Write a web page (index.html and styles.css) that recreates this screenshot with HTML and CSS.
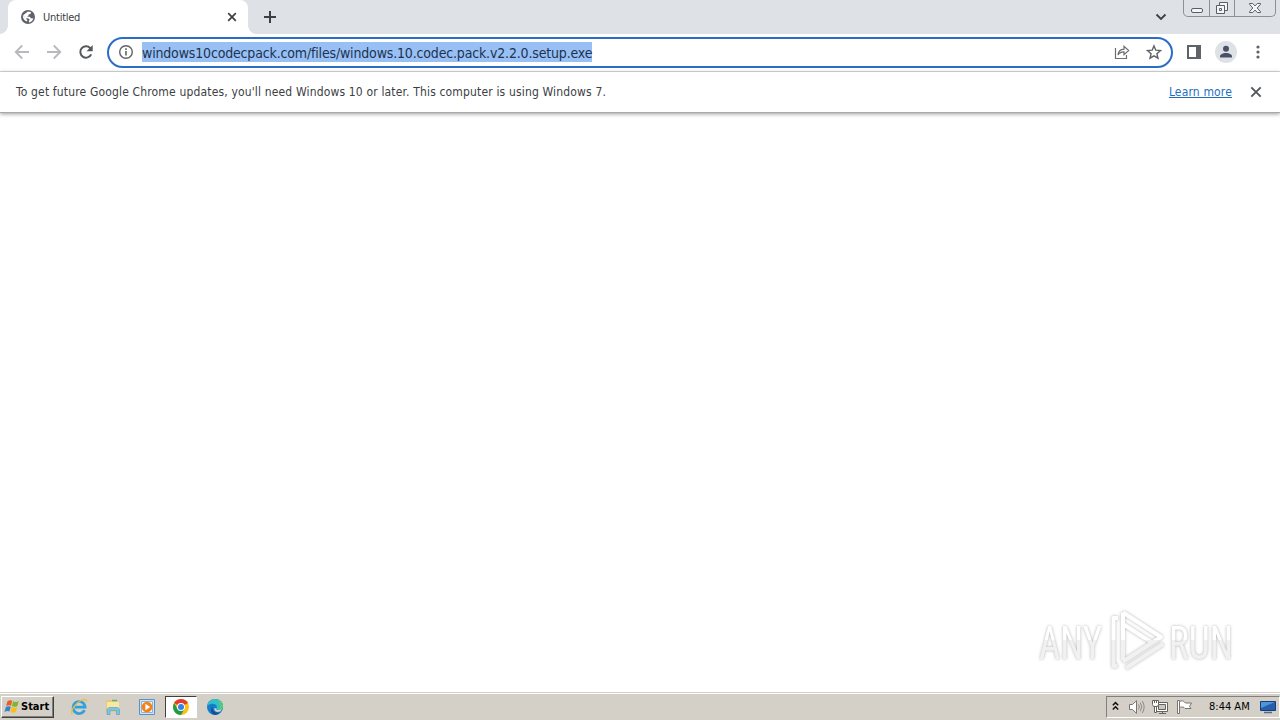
FILE: index.html
```html
<!DOCTYPE html>
<html lang="en">
<head>
    <meta charset="UTF-8">
    <meta name="viewport" content="width=device-width, initial-scale=1.0">
    <title>Untitled</title>
    <link rel="stylesheet" href="styles.css">
</head>
<body>
    <header class="tabstrip">
        <div class="tab">
            <svg class="globe" width="16" height="16" viewBox="0 0 16 16">
                <circle cx="8" cy="8" r="7" fill="#5f6368"/>
                <path d="M8 2.6l3.2.6-.8 1.8-1.8.4-.3 1.7-1.6.7h3l1.2 1.5 2.4.2c-.5 2-2 3.500-4.200 4l-.3-1.600 1-1.400-1.800-1.300-2.400-.3-2.900-2.300c.2 3.200 1.700 5.300 4.400 6l.2-1.700-1.600-1.300V8.900L3 6.300z" fill="#fff"/>
            </svg>
            <span class="tab-title">Untitled</span>
            <svg width="10" height="10" viewBox="0 0 10 10"><path d="M1.2 1.2l7.6 7.6M8.8 1.2L1.2 8.8" stroke="#3c4043" stroke-width="1.7"/></svg>
        </div>
        <svg class="new-tab" width="14" height="14" viewBox="0 0 14 14"><path d="M7 1v12M1 7h12" stroke="#3c4043" stroke-width="2"/></svg>
        <svg class="tab-search" width="12" height="8" viewBox="0 0 12 8"><path d="M1.5 1.5L6 6l4.500-4.500" fill="none" stroke="#3c4043" stroke-width="1.8"/></svg>
        <div class="window-buttons">
            <span class="win-min"><svg width="14" height="7" viewBox="0 0 14 7"><rect x="1.500" y="1.500" width="11" height="4" rx="1.500" fill="#f4f5f7" stroke="#5a5e66"/></svg></span>
            <span class="win-max"><svg width="14" height="14" viewBox="0 0 14 14"><path d="M4.500 1.500h8v8h-8z" fill="#f4f5f7" stroke="#5a5e66"/><path d="M1.500 4.500h8v8h-8z" fill="#f4f5f7" stroke="#5a5e66"/><path d="M4.500 7.500h2v2h-2z" fill="#f4f5f7" stroke="#5a5e66"/></svg></span>
            <span class="win-close"><svg width="14" height="12" viewBox="0 0 14 12"><path d="M1.500 1.500h3.200L7 3.900l2.300-2.400h3.200v.8L9.200 6l3.300 3.700v.8H9.300L7 8.100l-2.300 2.400H1.500v-.8L4.800 6 1.500 2.300z" fill="#f4f5f7" stroke="#5a5e66"/></svg></span>
        </div>
    </header>

    <nav class="toolbar">
        <svg class="nav-icon" width="16" height="16" viewBox="0 0 16 16"><path d="M15 8H2M8.200 1.500L1.700 8l6.500 6.500" fill="none" stroke="#b7b9bc" stroke-width="1.800"/></svg>
        <svg class="nav-icon" width="16" height="16" viewBox="0 0 16 16"><path d="M1 8h13M7.800 1.500L14.300 8l-6.500 6.500" fill="none" stroke="#b7b9bc" stroke-width="1.800"/></svg>
        <svg class="nav-icon" width="16" height="16" viewBox="0 0 16 16"><path d="M13.200 10.300a5.700 5.700 0 1 1-1.100-6.300l1.500 1.600" fill="none" stroke="#54585c" stroke-width="2"/><path d="M14.700 1v6.200H8.500z" fill="#54585c"/></svg>
        <div class="omnibox">
            <svg class="info" width="16" height="16" viewBox="0 0 16 16"><circle cx="8" cy="8" r="6.300" fill="none" stroke="#5f6368" stroke-width="1.400"/><path d="M8 7v4.500M8 4.300v1.700" stroke="#5f6368" stroke-width="1.600"/></svg>
            <span class="url">windows10codecpack.com/files/windows.10.codec.pack.v2.2.0.setup.exe</span>
            <svg class="share" width="16" height="16" viewBox="0 0 16 16"><path d="M1.500 4v10.500h11V11M4 11c.3-3.500 2.300-5.700 6-5.900V2.300l4.700 4.200L10 10.700V7.900c-3 0-4.700.9-6 3.100z" fill="none" stroke="#6b6f73" stroke-width="1.200"/></svg>
            <svg class="star" width="16" height="16" viewBox="0 0 16 16"><path d="M8 1.900l1.800 4.300 4.700.4-3.600 3.100 1.100 4.500L8 11.800l-4 2.400 1.100-4.500-3.600-3.100 4.700-.4z" fill="none" stroke="#5f6368" stroke-width="1.400"/></svg>
        </div>
        <svg class="side-panel" width="14" height="14" viewBox="0 0 14 14"><path d="M1 1h12v12H1z" fill="none" stroke="#5f6368" stroke-width="2"/><path d="M9 1h4v12H9z" fill="#5f6368"/></svg>
        <svg class="avatar" width="22" height="22" viewBox="0 0 22 22"><circle cx="11" cy="11" r="11" fill="#dee1e6"/><circle cx="11" cy="7.700" r="3" fill="#4a5068"/><path d="M5 16.500v-1.300c0-2 3-3.300 6-3.300s6 1.300 6 3.300v1.300z" fill="#4a5068"/></svg>
        <svg class="menu" width="4" height="14" viewBox="0 0 4 14"><g fill="#5f6368"><circle cx="2" cy="2" r="1.600"/><circle cx="2" cy="7" r="1.600"/><circle cx="2" cy="12" r="1.600"/></g></svg>
    </nav>

    <div class="infobar">
        <span class="message">To get future Google Chrome updates, you'll need Windows 10 or later. This computer is using Windows 7.</span>
        <a class="learn-more" href="#">Learn more</a>
        <svg width="12" height="12" viewBox="0 0 12 12"><path d="M1.300 1.300l9.400 9.400M10.700 1.300l-9.400 9.400" stroke="#54585c" stroke-width="1.900"/></svg>
    </div>

    <main class="page">
        <div class="watermark">
            <svg width="204" height="70" viewBox="0 0 204 70">
                <defs>
                    <linearGradient id="fade" x1="0" y1="0" x2="0" y2="70" gradientUnits="userSpaceOnUse">
                        <stop offset=".5" stop-color="#fff"/>
                        <stop offset=".5" stop-color="#f1f1f1"/>
                    </linearGradient>
                </defs>
                <g class="mark">
                    <text x="4" y="54" textLength="63" lengthAdjust="spacingAndGlyphs">ANY</text>
                    <text x="134" y="54" textLength="64" lengthAdjust="spacingAndGlyphs">RUN</text>
                    <path d="M88 7.500v48M88 7.500l38 24.500-38 24.500M88 19l28 18" class="play"/>
                    <path d="M83 13h-4.500v48h4M91 63l37-24" class="play"/>
                </g>
            </svg>
        </div>
    </main>

    <footer class="taskbar">
        <div class="start">
            <svg width="17" height="15" viewBox="0 0 17 15">
                <path d="M3.500 2.200C5.500.8 6.800 1 8.300 1.800L7 6.700c-1.600-.8-3-.8-4.900.4z" fill="#ee5b24"/>
                <path d="M9.200 2.300c1.900 1 3.600.9 5.600-.2l-1.400 4.800c-2 1.200-3.700 1-5.500.2z" fill="#7db72f"/>
                <path d="M1.900 8c1.900-1.200 3.300-1 4.900-.3l-1.400 4.900c-1.500-.8-3-.7-4.900.5z" fill="#3283cf"/>
                <path d="M7.700 8c1.800.9 3.500 1 5.500-.1l-1.400 4.900c-2 1.100-3.800 1.100-5.500.1z" fill="#fbbd1b"/>
            </svg>
            <span>Start</span>
        </div>
        <div class="launcher">
            <svg width="18" height="18" viewBox="0 0 18 18">
                <path d="M14.500 12.200a6 6 0 1 1 .6-3.100H5" fill="none" stroke="#2fa1de" stroke-width="2.700"/>
                <path d="M2.500 16.200C-.5 13 6 4.500 12 2c3-1.300 5-.7 4.200 2" fill="none" stroke="#e9bd3d" stroke-width="1.300"/>
            </svg>
        </div>
        <div class="launcher">
            <svg width="18" height="18" viewBox="0 0 18 18">
                <path d="M2 2h5l1 1.500h6V14H2z" fill="#e5ca70"/><path d="M3 4h12v9H3z" fill="#f8e8a4"/>
                <path d="M8 2.500h5" stroke="#65b26c" stroke-width="1.500"/>
                <path d="M3 16.500v-5.300l2-1.700h8.500l2 1.700v5.300h-3v-4h-6.500v4z" fill="#7cc4e5" stroke="#4d9abf" stroke-width=".6"/>
            </svg>
        </div>
        <div class="launcher">
            <svg width="18" height="18" viewBox="0 0 18 18">
                <path d="M1.500 1.500h15v15h-15z" fill="#d0e4f4" stroke="#5b91c4"/><path d="M3.500 3.500h11v11h-11z" fill="#edf5fb" stroke="#89b5da"/>
                <circle cx="9" cy="9" r="5.300" fill="#f58216"/><path d="M7.300 5.800l5 3.200-5 3.200z" fill="#fff"/>
            </svg>
        </div>
        <div class="launcher active">
            <svg width="18" height="18" viewBox="0 0 18 18">
                <circle cx="9" cy="9" r="8" fill="#fbc116"/>
                <path d="M9 9L2.100 5A8 8 0 0 1 15.900 5z" fill="#e33b2e"/>
                <path d="M2.100 5A8 8 0 0 0 9 17l3.500-6L9 9 5.500 11z" fill="#229a4c"/>
                <circle cx="9" cy="9" r="4" fill="#fff"/><circle cx="9" cy="9" r="3" fill="#377fe5"/>
            </svg>
        </div>
        <div class="launcher">
            <svg width="18" height="18" viewBox="0 0 18 18">
                <circle cx="9" cy="9" r="8" fill="#147fc8"/>
                <path d="M1.100 8.300C2 3.500 5.500 1 9.300 1 14 1 17 4.300 17 8c0 3-2.300 4-4.500 4-1.800 0-2.600-.8-2-1.700.9-1.400.3-3.700-2.500-4.300C5 5.400 2.500 6.300 1.100 8.300z" fill="#33bfc5"/>
                <path d="M11.500 1.400C15 2.500 17 5.200 17 8c0 3-2.300 4-4.500 4 2-3.500 1.500-7.500-1-10.600z" fill="#58cc72"/>
                <path d="M10.400 10.500c-.5.800.3 1.500 2.100 1.500 1.300 0 2.500-.3 3.400-1-.3 1-.9 1.800-1.700 2.600-3.600 1.300-6.200-.4-5.900-3.600z" fill="#d4d0c8"/>
                <path d="M6.700 8.500c-1 4 2.300 7 7 5.900A8 8 0 0 1 9 17c-4-.8-5.500-5.500-2.300-8.500z" fill="#124f9b"/>
            </svg>
        </div>
        <div class="tray">
            <svg class="chevrons" width="7" height="10" viewBox="0 0 7 10"><path d="M.8 4.300L3.500 1.600l2.700 2.700M.8 8.500l2.700-2.700 2.700 2.700" fill="none" stroke="#111" stroke-width="1.500"/></svg>
            <svg class="volume" width="17" height="16" viewBox="0 0 17 16"><path d="M1.500 5.500h3l4-3.800v12.600l-4-3.800h-3z" fill="#fff" stroke="#77756f"/><path d="M10.500 5.500q1.800 2.500 0 5M12.300 3.700q3 4.300 0 8.600M14.300 2q3.700 6 0 12" fill="none" stroke="#8d8b85"/></svg>
            <svg class="network" width="17" height="16" viewBox="0 0 17 16"><path d="M5.500 4.500h9v7h-9z" fill="#c9c8c3" stroke="#fff" stroke-width="2"/><path d="M4.500 3.500h11v9h-11zM6.500 5.500h7v5h-7zM7 14.500h7M10.500 12.500v2" fill="none" stroke="#66645f"/><path d="M2.500 7.500h2v6h-2z" fill="#fff" stroke="#66645f"/><path d="M.5 1.500h6v4l-1 2h-4l-1-2z" fill="#fff" stroke="#66645f"/><path d="M2.500 1v3M4.500 1v3" stroke="#66645f"/></svg>
            <svg class="flag" width="17" height="16" viewBox="0 0 17 16"><path d="M1.500 1.500h2v13h-2z" fill="#fff" stroke="#77756f"/><path d="M3.500 2.500c2-1 3.500-1 5 .5l1 1h6l-2 3.500 1.500 2H9L8 8.500c-1.500-.8-3-.6-4.500 0z" fill="#fff" stroke="#77756f"/></svg>
            <span class="clock">8:44 AM</span>
            <svg class="desktop" width="16" height="14" viewBox="0 0 16 14"><path d="M.5 1.500h15v9H.5z" fill="#245fab" stroke="#173e76"/><path d="M1 2h14L1 8z" fill="#4f94dc"/><path d="M4 12.500h8" stroke="#536b8a" stroke-width="1.500"/></svg>
        </div>
    </footer>
</body>
</html>
```
FILE: styles.css
```css
* {
    box-sizing: border-box;
}

body {
    margin: 0;
    height: 720px;
    display: flex;
    flex-direction: column;
    overflow: hidden;
    background-color: #fff;
    font-family: "DejaVu Sans Condensed", "DejaVu Sans", sans-serif;
    font-stretch: condensed;
}

svg {
    display: block;
    flex: none;
}

span, a {
    white-space: nowrap;
}

.tabstrip {
    flex: none;
    height: 34px;
    display: flex;
    align-items: flex-start;
    padding-left: 8px;
    background-color: #dee1e6;
}

.tab {
    position: relative;
    width: 240px;
    height: 34px;
    display: flex;
    align-items: center;
    padding: 0 11px 0 12px;
    border-radius: 8px 8px 0 0;
    background-color: #fff;
}

/* curved feet of the active tab */
.tab::before, .tab::after {
    content: "";
    position: absolute;
    bottom: 0;
    width: 8px;
    height: 8px;
}

.tab::before {
    left: -8px;
    background: radial-gradient(circle at 0 0, transparent 7.5px, #fff 8px);
}

.tab::after {
    right: -8px;
    background: radial-gradient(circle at 100% 0, transparent 7.5px, #fff 8px);
}

.tab-title {
    flex: 1;
    margin-left: 7px;
    font-size: 11px;
    letter-spacing: -0.25px;
    color: #3c4043;
}

.new-tab {
    margin: 10px 0 0 15px;
}

.tab-search {
    margin: 13px 16px 0 auto;
}

.window-buttons {
    width: 93px;
    height: 17px;
    margin-right: 4px;
    display: flex;
    border: 1px solid #8b8f96;
    border-top: none;
    border-radius: 0 0 5px 5px;
}

.window-buttons span {
    display: flex;
    align-items: center;
    justify-content: center;
}

.win-min {
    width: 25px;
    padding-top: 4px;
}

.win-max {
    width: 25px;
    border-left: 1px solid #8b8f96;
}

.win-close {
    flex: 1;
    border-left: 1px solid #8b8f96;
}

.toolbar {
    flex: none;
    height: 38px;
    display: flex;
    align-items: center;
    padding: 0 20px 1px 14px;
    border-bottom: 1px solid #dadce0;
}

.nav-icon {
    margin-right: 16px;
}

.omnibox {
    width: 1066px;
    height: 31px;
    margin-left: -3px;
    display: flex;
    align-items: center;
    padding: 0 9px;
    border: 2px solid #2a6cc8;
    border-radius: 16px;
}

.url {
    margin-left: 8px;
    height: 20px;
    line-height: 22px;
    font-size: 14px;
    letter-spacing: -0.165px;
    color: #1b3350;
    background-color: #99c0f5;
}

.share {
    margin-left: auto;
}

.star {
    margin-left: 16px;
}

.side-panel {
    margin-left: 14px;
}

.avatar {
    margin-left: 14px;
}

.menu {
    margin-left: auto;
}

.infobar {
    flex: none;
    height: 41px;
    display: flex;
    align-items: center;
    padding: 0 18px 0 16px;
    border-bottom: 1px solid #a9a9a9;
    box-shadow: 0 1px 4px rgba(0, 0, 0, 0.4);
    font-size: 12px;
    letter-spacing: 0.16px;
}

.message {
    color: #3c4043;
}

.learn-more {
    margin: 0 18px 0 auto;
    color: #1f6fbf;
}

.page {
    flex: 1;
    display: flex;
    align-items: flex-end;
    justify-content: flex-end;
    padding: 0 41px 17px 0;
}

.watermark svg {
    overflow: visible;
}

.mark {
    filter: drop-shadow(0 0 1.5px rgba(0, 0, 0, 0.3));
}

.mark text {
    font-family: Roboto, "Liberation Sans", sans-serif;
    font-size: 47px;
    fill: url(#fade);
}

.play {
    fill: none;
    stroke: url(#fade);
    stroke-width: 4;
    stroke-linejoin: round;
}

.taskbar {
    flex: none;
    height: 28px;
    display: flex;
    align-items: center;
    border-top: 1px solid #d4d0c8;
    box-shadow: inset 0 1px #fff;
    background-color: #d4d0c8;
}

.start {
    width: 53px;
    height: 22px;
    margin: 0 9px 0 1px;
    display: flex;
    align-items: center;
    padding-left: 2px;
    border: 1px solid;
    border-color: #fff #404040 #404040 #fff;
    box-shadow: inset -1px -1px #808080;
    font-size: 11px;
    font-weight: bold;
    color: #000;
}

.launcher {
    width: 32px;
    height: 22px;
    margin-right: 2px;
    display: flex;
    align-items: center;
    justify-content: center;
}

.active {
    border: 1px solid;
    border-color: #404040 #fff #fff #404040;
    background-color: #fff;
}

.tray {
    width: 174px;
    height: 22px;
    margin-left: auto;
    display: flex;
    align-items: center;
    padding-left: 5px;
    border: 1px solid;
    border-color: #808080 #fff #fff #808080;
}

.chevrons {
    margin-bottom: 2px;
}

.volume {
    margin-left: 9px;
}

.network, .flag {
    margin-left: 7px;
}

.clock {
    margin-left: 16px;
    font-size: 11px;
    color: #000;
}

.desktop {
    margin-left: auto;
    margin-right: 3px;
}
```
